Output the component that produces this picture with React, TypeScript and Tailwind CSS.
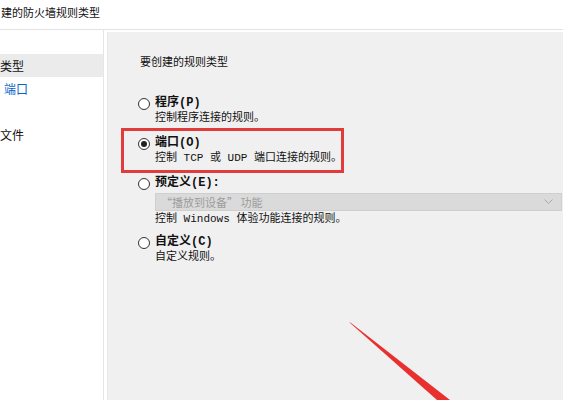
import React, { FC } from "react";

const sans = { fontFamily: '"Noto Sans CJK SC", "Microsoft YaHei", sans-serif' };
const mono = { fontFamily: '"Liberation Mono", "Noto Sans CJK SC", monospace' };

type Step = { label: string; indent: string; active?: boolean; link?: boolean };

// only the visible tail of each step name (the window is cut at the left edge)
const steps: Step[] = [
  { label: "类型", indent: "pl-0", active: true },
  { label: "端口", indent: "pl-[4px]", link: true },
  { label: "", indent: "" },
  { label: "文件", indent: "pl-0" },
  { label: "", indent: "" },
];

const Radio: FC<{ checked?: boolean }> = ({ checked }) => (
  <div className="w-[12px] h-[12px] rounded-full border border-[#333] bg-white flex items-center justify-center shrink-0">
    {checked && <div className="w-[6px] h-[6px] rounded-full bg-[#222]" />}
  </div>
);

const Option: FC<{
  label: string;
  desc: string;
  checked?: boolean;
  className?: string;
  children?: React.ReactNode;
}> = ({ label, desc, checked, className, children }) => (
  <div className={`flex ${className ?? ""}`}>
    <div className="w-[17px] h-[15px] flex items-center">
      <Radio checked={checked} />
    </div>
    <div className="flex-1 flex flex-col">
      <div className="h-[15px] leading-[15px] text-[12px] font-bold text-[#111] whitespace-nowrap">
        {label}
      </div>
      {children}
      <div className="h-[15px] leading-[15px] text-[11px] text-[#111] whitespace-nowrap">
        {desc}
      </div>
    </div>
  </div>
);

const App: FC = () => {
  return (
    <div className="relative w-[563px] h-[400px] overflow-hidden bg-white" style={sans}>
      {/* header */}
      <div className="h-[30px] border-b border-[#e3e3e3] flex items-start pt-[4px]">
        <div className="text-[11px] leading-[16px] text-[#111] whitespace-nowrap pl-[1px]">
          建的防火墙规则类型
        </div>
      </div>

      <div className="flex h-[370px]">
        {/* step list */}
        <div className="w-[104px] border-r border-[#e6e6e6] pt-[24px] overflow-hidden">
          {steps.map((s, i) => (
            <div
              key={i}
              className={`h-[23px] flex items-center ${s.indent} ${s.active ? "bg-[#ebebeb]" : ""}`}
            >
              {s.label && (
                <span
                  className={`text-[12px] whitespace-nowrap ${
                    s.link ? "text-[#0a64c8]" : "text-[#111]"
                  }`}
                >
                  {s.label}
                </span>
              )}
            </div>
          ))}
        </div>

        {/* content */}
        <div className="flex-1 ml-[3px] mt-[2px] bg-[#f0f0f0] border-l border-[#e8e8e8] pl-[30px] pt-[21px]" style={mono}>
          <div className="h-[16px] leading-[16px] text-[11px] text-[#111] pl-[2px]" style={sans}>
            要创建的规则类型
          </div>

          <Option className="mt-[27px]" label="程序(P)" desc="控制程序连接的规则。" />
          <Option className="mt-[10px]" label="端口(O)" desc="控制 TCP 或 UDP 端口连接的规则。" checked />
          <Option className="mt-[10px]" label="预定义(E):" desc="控制 Windows 体验功能连接的规则。">
            <div className="mt-[2px] mb-[1px] h-[18px] mr-[1px] bg-[#dadada] border border-[#cfcfcf] flex items-center justify-between pl-[5px] pr-[8px]">
              <span className="text-[11px] text-[#9c9c9c] whitespace-nowrap" style={sans}>
                “播放到设备” 功能
              </span>
              <svg width="9" height="6" viewBox="0 0 9 6">
                <path d="M0.5 0.5 L4.5 4.5 L8.5 0.5" fill="none" stroke="#a8a8a8" strokeWidth="1" />
              </svg>
            </div>
          </Option>
          <Option className="mt-[8px]" label="自定义(C)" desc="自定义规则。" />
        </div>
      </div>

      {/* red annotation box */}
      <div className="absolute left-[121px] top-[128px] w-[223px] h-[45px] border-[3px] border-[#e03c3c]" />

      {/* red annotation arrow */}
      <svg className="absolute left-0 top-0" width="563" height="400" viewBox="0 0 563 400">
        <polygon points="349,322 351,323 450,400 437,400" fill="#e8302e" />
      </svg>
    </div>
  );
};

export default App;
